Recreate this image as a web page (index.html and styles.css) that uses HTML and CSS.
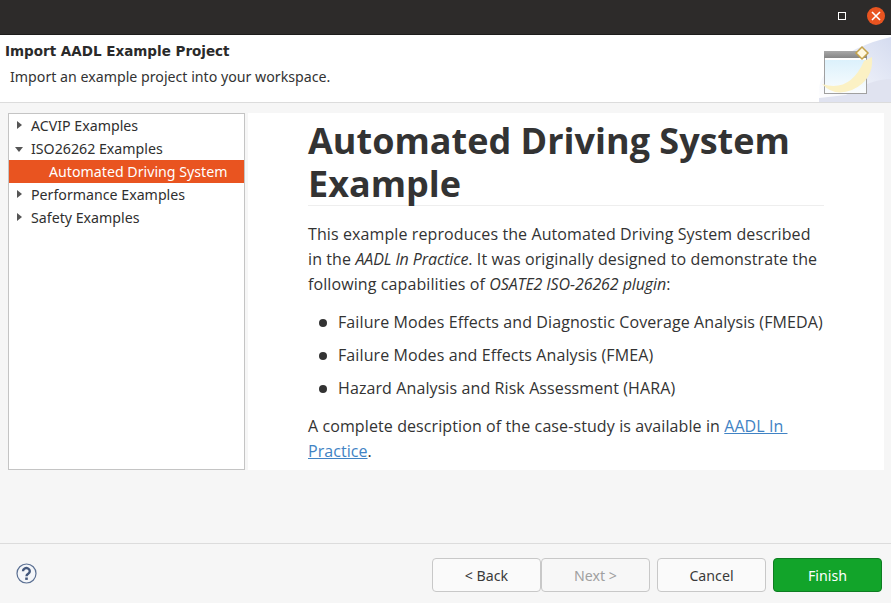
FILE: index.html
```html
<!DOCTYPE html>
<html lang="en">
<head>
<meta charset="utf-8">
<title>Import AADL Example Project</title>
<link rel="stylesheet" href="styles.css">
</head>
<body>
<div class="window">
  <div class="titlebar">
    <span class="max-btn"></span>
    <span class="close-btn">
      <svg width="12" height="12" viewBox="0 0 12 12"><path d="M2 2l8 8M10 2l-8 8" stroke="#fff" stroke-width="1.6" fill="none"/></svg>
    </span>
  </div>
  <header class="banner">
    <div class="banner-text">
      <div class="banner-title">Import AADL Example Project</div>
      <div class="banner-sub">Import an example project into your workspace.</div>
    </div>
    <svg class="banner-art" width="75" height="67" viewBox="0 0 75 67">
      <defs>
        <linearGradient id="bg" x1="0" y1="1" x2="1" y2="0"><stop offset="0" stop-color="#fff"/><stop offset="1" stop-color="#d5dcf0"/></linearGradient>
        <linearGradient id="glass" x1="0" y1="0" x2="0" y2="1"><stop offset="0" stop-color="#d4eefb"/><stop offset="1" stop-color="#fbfdfe"/></linearGradient>
        <linearGradient id="bar" x1="0" y1="0" x2="0" y2="1"><stop offset="0" stop-color="#a8a8a8"/><stop offset="1" stop-color="#858585"/></linearGradient>
      </defs>
      <path d="M3 67V52Q8 30 40 14Q60 5 75 2V67Z" fill="url(#bg)"/>
      <path d="M30 60Q55 44 75 44V67H3V63Z" fill="#e0e3f0"/>
      <rect x="8.500" y="16.500" width="42" height="42" fill="url(#glass)" stroke="#a0a0a0"/>
      <rect x="8" y="16" width="43" height="7" fill="url(#bar)"/>
      <rect x="9" y="23" width="41" height="2" fill="#fff"/>
      <path d="M6 49Q34 58 48 26L56 22Q58 45 36 55Q18 62 6 49Z" fill="#fbf1c4"/>
      <path d="M40 18l6-6 6 6-6 6z" fill="#fff8e0" stroke="#c4a24a" stroke-width="1.500"/>
    </svg>
  </header>
  <main class="body">
    <nav class="tree">
      <div class="row"><span class="arrow right"></span>ACVIP Examples</div>
      <div class="row"><span class="arrow down"></span>ISO26262 Examples</div>
      <div class="row selected">Automated Driving System</div>
      <div class="row"><span class="arrow right"></span>Performance Examples</div>
      <div class="row"><span class="arrow right"></span>Safety Examples</div>
    </nav>
    <article class="doc">
      <h1>Automated Driving System Example</h1>
      <p>This example reproduces the Automated Driving System described in the <em>AADL In Practice</em>. It was originally designed to demonstrate the following capabilities of <em>OSATE2 ISO-26262 plugin</em>:</p>
      <ul>
        <li>Failure Modes Effects and Diagnostic Coverage Analysis (FMEDA)</li>
        <li>Failure Modes and Effects Analysis (FMEA)</li>
        <li>Hazard Analysis and Risk Assessment (HARA)</li>
      </ul>
      <p>A complete description of the case-study is available in <a href="#">AADL In&nbsp;<wbr>Practice</a>.</p>
    </article>
  </main>
  <footer class="footer">
    <svg class="help" width="21" height="21" viewBox="0 0 21 21">
      <circle cx="10.500" cy="10.500" r="9.500" fill="#f4f6f9" stroke="#5b7093" stroke-width="1.200"/>
      <path d="M7 8.200a3.400 3.100 0 1 1 5.200 2.600c-1.100.7-1.700 1.200-1.700 2.500" fill="none" stroke="#44587c" stroke-width="2.400"/>
      <rect x="9.200" y="14.500" width="2.600" height="2.400" fill="#44587c"/>
    </svg>
    <div class="actions">
      <div class="pair">
        <button class="btn" type="button">&lt; Back</button>
        <button class="btn" type="button" disabled>Next &gt;</button>
      </div>
      <button class="btn" type="button">Cancel</button>
      <button class="btn primary" type="button">Finish</button>
    </div>
  </footer>
</div>
</body>
</html>
```
FILE: styles.css
```css
* { box-sizing: border-box; }
html, body { margin: 0; padding: 0; }
body { width: 891px; height: 603px; overflow: hidden; background: #f6f6f6; font-family: "Noto Sans", sans-serif; }
.window { display: flex; flex-direction: column; height: 603px; }
.titlebar { height: 35px; flex: none; background: #2d2b2a; border-bottom: 1px solid #1d1c1b; display: flex; align-items: center; justify-content: flex-end; padding-right: 6px; gap: 21px; }
.max-btn { width: 8px; height: 8px; border: 1px solid #fff; margin-bottom: 3px; }
.close-btn { width: 18px; height: 18px; border-radius: 50%; background: #e95420; display: flex; align-items: center; justify-content: center; margin-bottom: 2px; }
.banner { height: 68px; flex: none; background: #fff; border-bottom: 1px solid #dcdcdc; display: flex; justify-content: space-between; }
.banner-title { font: bold 13.5px/18px "DejaVu Sans", sans-serif; color: #2a2a2a; margin: 7px 0 0 5px; }
.banner-sub { font-size: 14.2px; line-height: 20px; color: #333; margin: 7px 0 0 10px; }
.banner-art { flex: none; align-self: flex-start; }
.body { flex: none; height: 440px; padding: 10px 7px 73px 8px; display: flex; gap: 3px; }
.tree { width: 237px; flex: none; background: #fff; border: 1px solid #c4c4c4; }
.row { height: 23px; font-size: 14.2px; line-height: 23px; color: #2f2f2f; padding-left: 22px; position: relative; }
.selected { background: #e95420; color: #fff; padding-left: 40px; }
.arrow { position: absolute; width: 0; height: 0; }
.arrow.right { left: 8px; top: 7px; border-left: 5px solid #555; border-top: 4.500px solid transparent; border-bottom: 4.500px solid transparent; }
.arrow.down { left: 6px; top: 10px; border-top: 5px solid #555; border-left: 4.500px solid transparent; border-right: 4.500px solid transparent; }
.doc { flex: 1; background: #fff; padding: 6px 60px 0; font-family: "Open Sans", sans-serif; font-size: 16px; letter-spacing: 0.1px; line-height: 25px; color: #333; overflow: hidden; }
.doc h1 { margin: 0 0 16px; font-size: 36px; line-height: 43px; font-weight: 700; letter-spacing: 0; color: #333; border-bottom: 1px solid #eee; }
.doc em { letter-spacing: -0.09px; }
.doc p { margin: 0 0 8px; }
.doc ul { margin: 13px 0 13px; padding-left: 30px; list-style: none; }
.doc li { margin-bottom: 8px; position: relative; }
.doc li::before { content: ""; position: absolute; left: -19px; top: 9px; width: 8px; height: 8px; border-radius: 50%; background: #333; }
.doc a { color: #4183c4; text-decoration: underline; letter-spacing: 0.05px; }
.footer { flex: 1; border-top: 1px solid #dcdcdc; display: flex; justify-content: space-between; padding: 14px 9px 0 16px; }
.help { margin-top: 5px; }
.actions { display: flex; gap: 7px; }
.pair { display: flex; gap: 0; }
.btn { width: 109px; height: 34px; font-family: "Noto Sans", sans-serif; font-size: 14.2px; color: #3a3a3a; background: #fafafa; border: 1px solid #c8c8c8; border-radius: 4px; padding: 0; }
.btn:disabled { color: #a0a0a0; background: #f7f7f7; }
.primary { background: #12a42a; border-color: #0e7d21; color: #fff; }
```
